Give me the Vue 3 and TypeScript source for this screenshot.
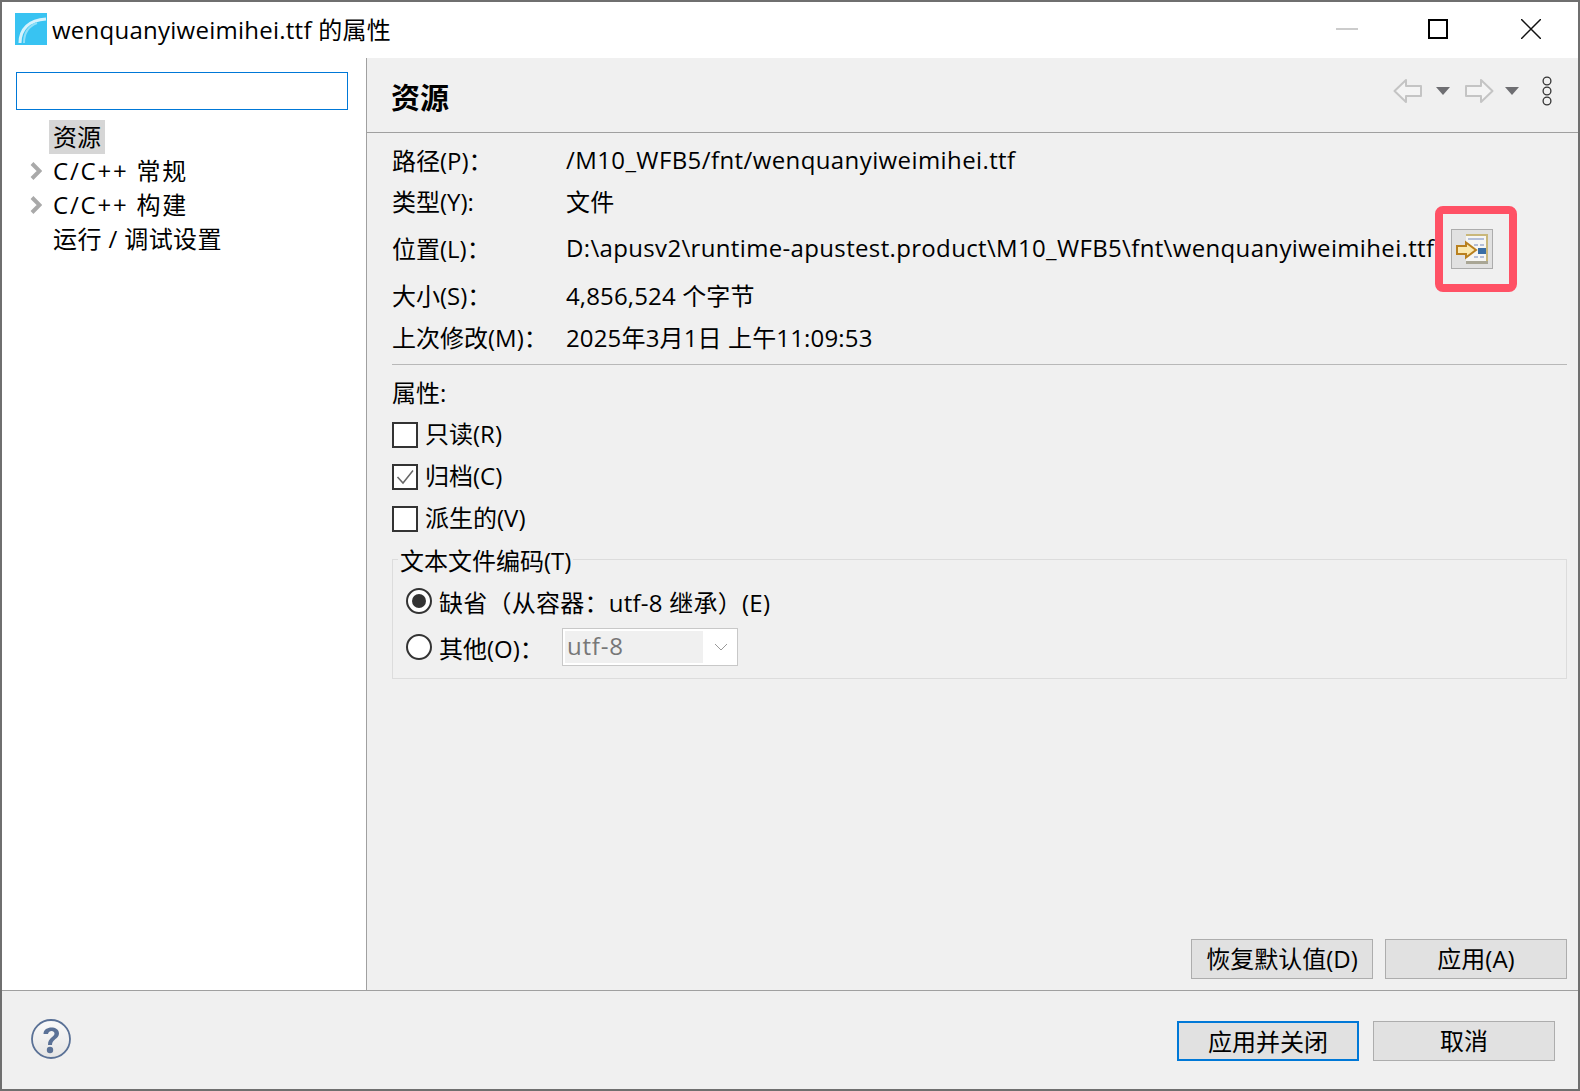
<script setup lang="ts">
interface InfoRow { label: string; value: string; cls: string }
const rows: InfoRow[] = [
  { label: '路径(P)：', value: '/M10_WFB5/fnt/wenquanyiweimihei.ttf', cls: 'r1' },
  { label: '类型(Y):', value: '文件', cls: 'r2' },
  { label: '位置(L)：', value: 'D:\\apusv2\\runtime-apustest.product\\M10_WFB5\\fnt\\wenquanyiweimihei.ttf', cls: 'r3' },
  { label: '大小(S)：', value: '4,856,524 个字节', cls: 'r4' },
  { label: '上次修改(M)：', value: '2025年3月1日 上午11:09:53', cls: 'r5' },
]
const checks = [
  { label: '只读(R)', on: false },
  { label: '归档(C)', on: true },
  { label: '派生的(V)', on: false },
]
const tree = [
  { label: '资源', arrow: false, sel: true, wide: false },
  { label: 'C/C++ 常规', arrow: true, sel: false, wide: true },
  { label: 'C/C++ 构建', arrow: true, sel: false, wide: true },
  { label: '运行 / 调试设置', arrow: false, sel: false, wide: false },
]
</script>

<template>
  <div class="win">
    <header class="titlebar">
      <svg class="appicon" width="32" height="32" viewBox="0 0 32 32">
        <rect width="32" height="32" fill="#38c3f2" />
        <path d="M5 30 C5 16 14 7 31 6" fill="none" stroke="#d5f2fc" stroke-width="3" />
        <path d="M9 30 C9 20 14 13 22 10" fill="none" stroke="#8fdff8" stroke-width="2" />
      </svg>
      <span class="wintitle">wenquanyiweimihei.ttf 的属性</span>
      <div class="winctl">
        <span class="min"></span>
        <span class="max"></span>
        <svg width="20" height="20" viewBox="0 0 20 20"><path d="M0 0L20 20M20 0L0 20" stroke="#111" stroke-width="1.5" /></svg>
      </div>
    </header>
    <div class="body">
      <aside class="side">
        <div class="search"></div>
        <ul class="tree">
          <li v-for="t in tree" :key="t.label">
            <svg v-if="t.arrow" class="chev" width="12" height="18" viewBox="0 0 12 18"><path d="M2 1.500L9.500 9L2 16.500" fill="none" stroke="#a9a9a9" stroke-width="4" /></svg>
            <span class="tlabel" :class="{ sel: t.sel, wide: t.wide }">{{ t.label }}</span>
          </li>
        </ul>
      </aside>
      <main class="pane">
        <div class="phead">
          <h1>资源</h1>
          <div class="nav">
            <svg width="30" height="26" viewBox="0 0 30 26"><path d="M1.500 13L13 2V8H28V18H13V24Z" fill="#f4f4f4" stroke="#c4c4c4" stroke-width="2" stroke-linejoin="round" /></svg>
            <svg class="tri" width="14" height="8" viewBox="0 0 14 8"><path d="M0 0H14L7 8Z" fill="#6e6e72" /></svg>
            <svg class="fwd" width="30" height="26" viewBox="0 0 30 26"><path d="M28.500 13L17 2V8H2V18H17V24Z" fill="#f4f4f4" stroke="#c4c4c4" stroke-width="2" stroke-linejoin="round" /></svg>
            <svg class="tri2" width="14" height="8" viewBox="0 0 14 8"><path d="M0 0H14L7 8Z" fill="#6e6e72" /></svg>
            <svg class="dots" width="10" height="30" viewBox="0 0 10 30"><g fill="none" stroke="#333" stroke-width="1.300"><circle cx="5" cy="5" r="3.900" /><circle cx="5" cy="15" r="3.900" /><circle cx="5" cy="25" r="3.900" /></g></svg>
          </div>
        </div>
        <div class="content">
          <div v-for="r in rows" :key="r.label" class="info" :class="r.cls">
            <span class="lab">{{ r.label }}</span>
            <span class="val">{{ r.value }}</span>
            <span v-if="r.cls === 'r3'" class="hl">
              <span class="openbtn">
                <svg width="32" height="30" viewBox="0 0 32 30">
                  <rect x="10" y="0" width="22" height="30" fill="#a9a695" />
                  <rect x="10" y="1" width="20" height="26" fill="#f6f6f4" />
                  <path d="M10 1H31V27" fill="none" stroke="#c9b77a" stroke-width="2" />
                  <path d="M12 5H28M18 11H22M24 11H28M18 23H22M24 23H28" stroke="#b4bfd8" stroke-width="2" />
                  <rect x="22" y="14" width="8" height="6" fill="#3a6ea5" />
                  <path d="M1 12H10V8.500L20 16L10 23.500V20H1Z" fill="#fbe9b0" stroke="#b9801f" stroke-width="2" />
                </svg>
              </span>
            </span>
          </div>
          <hr class="rule" />
          <div class="attr">属性:</div>
          <label v-for="c in checks" :key="c.label" class="chk">
            <span class="box">
              <svg v-if="c.on" width="22" height="22" viewBox="0 0 22 22"><path d="M3.500 11L9 17L19 4.500" fill="none" stroke="#666" stroke-width="1.500" /></svg>
            </span>
            <span class="chktext">{{ c.label }}</span>
          </label>
          <fieldset class="enc">
            <legend>文本文件编码(T)</legend>
            <div class="radio first">
              <span class="rd on"></span><span class="rdtext">缺省（从容器：utf-8 继承）(E)</span>
            </div>
            <div class="radio second">
              <span class="rd"></span><span class="other">其他(O)：</span>
              <div class="combo">
                <span class="comboval">utf-8</span>
                <svg width="14" height="8" viewBox="0 0 14 8"><path d="M1 1L7 7L13 1" fill="none" stroke="#999" stroke-width="1" /></svg>
              </div>
            </div>
          </fieldset>
          <div class="spacer"></div>
          <div class="btns">
            <button class="btn">恢复默认值(D)</button>
            <button class="btn">应用(A)</button>
          </div>
        </div>
      </main>
    </div>
    <footer class="foot">
      <svg class="help" width="40" height="40" viewBox="0 0 40 40">
        <defs><linearGradient id="hg" x1="0" y1="0" x2="0" y2="1"><stop offset="0" stop-color="#fafafa" /><stop offset="1" stop-color="#e4e4e4" /></linearGradient></defs>
        <circle cx="20" cy="20" r="19" fill="url(#hg)" stroke="#5a7196" stroke-width="1.800" />
        <path d="M12.500 15C12.500 6.500 28 6.500 28 14.500C28 20 21 20 21 26H17C17 18 23.500 18.500 23.500 14.500C23.500 11 17.500 11 17 15Z" fill="#5a7196" />
        <circle cx="19" cy="31" r="3.200" fill="#5a7196" />
      </svg>
      <div class="footbtns">
        <button class="btn primary">应用并关闭</button>
        <button class="btn">取消</button>
      </div>
    </footer>
  </div>
</template>

<style>
html, body { margin: 0; padding: 0; background: #6f6f6f; }
</style>

<style scoped>
* { box-sizing: border-box; }
.win {
  width: 1580px; height: 1091px; border: 2px solid #6f6f6f;
  background: #f0f0f0; display: flex; flex-direction: column;
  font-family: "Open Sans", "Noto Sans CJK SC", sans-serif; font-size: 24px; color: #000;
  overflow: hidden;
}
.titlebar { height: 56px; background: #fff; display: flex; align-items: center; padding: 0 0 2px 13px; flex: none; }
.appicon { flex: none; }
.wintitle { margin: 2px 0 0 5px; line-height: 32px; letter-spacing: .25px; }
.winctl { margin-left: auto; display: flex; align-items: center; }
.min { width: 22px; height: 2px; background: #ccc; }
.max { width: 20px; height: 20px; border: 2px solid #000; margin-left: 70px; margin-right: 73px; }
.winctl svg { margin-right: 37px; }
.body { flex: 1; display: flex; min-height: 0; }
.side { width: 364px; background: #fff; flex: none; padding: 14px 0 0 14px; }
.search { width: 332px; height: 38px; border: 1px solid #0078d7; background: #fff; }
.tree { list-style: none; margin: 10px 0 0; padding: 0; }
.tree li { height: 34px; display: flex; align-items: center; position: relative; padding-left: 33px; white-space: nowrap; }
.chev { position: absolute; left: 14px; top: 8px; }
.tlabel { padding: 0 4px; line-height: 34px; letter-spacing: .4px; }
.tlabel.sel { background: #d6d6d6; letter-spacing: 0; }
.tlabel.wide { letter-spacing: 1.800px; }
.pane { flex: 1; border-left: 1px solid #a0a0a0; display: flex; flex-direction: column; min-width: 0; }
.phead { height: 75px; border-bottom: 1px solid #a0a0a0; display: flex; align-items: center; padding-left: 24px; flex: none; }
h1 { margin: 6px 0 0; font-size: 29px; font-weight: 700; line-height: 40px; }
.nav { margin: 0 0 8px auto; display: flex; align-items: center; padding-right: 26px; }
.tri { margin-left: 13px; }
.tri2 { margin-left: 11px; }
.fwd { margin-left: 14px; }
.dots { margin-left: 23px; }
.content { flex: 1; display: flex; flex-direction: column; padding: 0 11px 11px 25px; min-height: 0; }
.info { display: flex; align-items: center; white-space: nowrap; }
.r1 { height: 39px; margin-top: 7px; }
.r2 { height: 42px; }
.r3 { height: 52px; }
.r4 { height: 42px; }
.r5 { height: 42px; }
.lab { width: 174px; flex: none; }
.val { letter-spacing: .15px; }
.r1 .val { letter-spacing: .4px; }
.r3 .val { letter-spacing: .34px; }
.hl { margin: 4px 0 0 1px; width: 82px; height: 86px; border: 8px solid #ff5165; border-radius: 8px; display: flex; align-items: center; padding-left: 8px; flex: none; }
.openbtn { width: 42px; height: 40px; border: 1px solid #acacac; background: #e1e1e1; display: flex; align-items: center; justify-content: center; }
.rule { width: 100%; border: 0; border-top: 1px solid #b8b8b8; margin: 7px 0 0; }
.attr { height: 42px; line-height: 42px; margin-top: 7px; }
.chk { height: 42px; display: flex; align-items: center; gap: 7px; }
.chktext { padding-bottom: 5px; }
.box { width: 26px; height: 26px; border: 2px solid #333; background: #fff; display: flex; align-items: center; justify-content: center; }
.enc { margin: 2px 0 0; padding: 0 0 0 13px; border: 1px solid #dcdcdc; height: 137px; min-width: 0; }
legend { padding: 0 2px; margin-left: -8px; line-height: 38px; height: 34px; }
.radio { display: flex; align-items: center; height: 46px; white-space: nowrap; }
.first { margin-top: 2px; }
.rdtext { letter-spacing: .25px; }
.rd { width: 26px; height: 26px; border: 2px solid #333; border-radius: 50%; background: #fff; margin-right: 7px; flex: none; position: relative; }
.rd.on::after { content: ""; position: absolute; left: 4px; top: 4px; width: 14px; height: 14px; border-radius: 50%; background: #333; }
.other { width: 123px; }
.combo { width: 176px; height: 38px; border: 1px solid #c8c8c8; background: #fff; padding: 2px; display: flex; align-items: center; }
.comboval { width: 138px; height: 100%; background: #f0f0f0; color: #777; padding-left: 2px; line-height: 30px; letter-spacing: .8px; }
.combo svg { margin-left: 11px; }
.spacer { flex: 1; }
.btns { display: flex; justify-content: flex-end; gap: 12px; }
.btn { width: 182px; height: 40px; border: 1px solid #adadad; background: #e1e1e1; font: inherit; color: #000; padding: 0 0 3px; }
.primary { border: 2px solid #0078d7; }
.foot { height: 99px; border-top: 1px solid #a0a0a0; display: flex; align-items: center; flex: none; padding: 0 23px 0 29px; }
.help { margin-bottom: 3px; }
.footbtns { margin: 2px 0 0 auto; display: flex; gap: 14px; }
</style>
